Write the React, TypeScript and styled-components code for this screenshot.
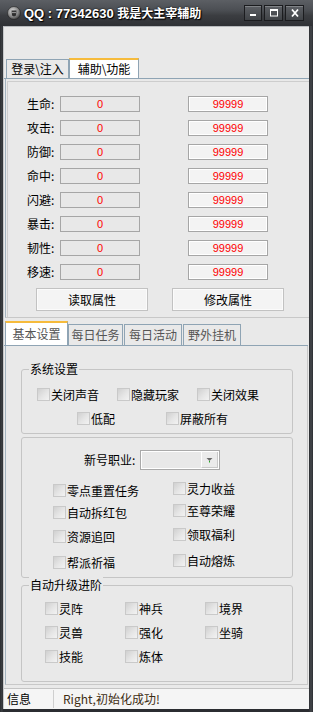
import React from 'react';
import styled, { createGlobalStyle } from 'styled-components';

const GlobalStyle = createGlobalStyle`
  html, body { margin: 0; padding: 0; background: #2f3135; }
  body {
    font-family: "Noto Sans CJK SC", "Liberation Sans", sans-serif;
    font-size: 12px;
    color: #000;
  }
  #root { width: 313px; height: 712px; }
`;

const Win = styled.div`
  width: 313px;
  height: 712px;
  display: flex;
  flex-direction: column;
  background: linear-gradient(90deg, #2b2d31 0px, #3d4044 2px, #2b2d31 3px, #2b2d31 309px, #45484c 311px, #2b2d31 313px);
  box-sizing: border-box;
  overflow: hidden;
`;

const TitleBar = styled.div`
  height: 26px;
  flex: none;
  display: flex;
  align-items: center;
  padding: 0 9px 0 7px;
  background: linear-gradient(#5c5f64 0%, #4b4e53 40%, #3b3d41 60%, #2f3135 100%);
`;

const AppIcon = styled.svg`
  width: 14px;
  height: 14px;
  flex: none;
`;

const Title = styled.div`
  margin-left: 3px;
  color: #fff;
  font: bold 13px "Liberation Sans", "Noto Sans CJK SC", sans-serif;
  line-height: 16px;
  text-shadow: 0 0 2px #000, 1px 1px 1px #000;
  white-space: nowrap;
`;

const TitleCn = styled.span`
  font-family: "Noto Sans CJK SC", sans-serif;
  font-size: 12px;
  font-weight: bold;
`;

const WinButtons = styled.div`
  margin-left: auto;
  align-self: flex-start;
  margin-top: 5px;
  display: flex;
  gap: 2px;
`;

const WinButton = styled.div<{ $w: number }>`
  width: ${(p) => p.$w}px;
  height: 16px;
  box-sizing: border-box;
  border: 1px solid #1b1c1f;
  background: linear-gradient(#5d6065, #404347);
  box-shadow: inset 0 1px 0 rgba(255, 255, 255, 0.22);
  display: flex;
  align-items: center;
  justify-content: center;
`;

const Client = styled.div`
  flex: 1;
  display: flex;
  flex-direction: column;
  margin: 0 4px 3px 3px;
  background: #e9e9e9;
  border-top: 1px solid #b8bbbe;
  border-left: 1px solid #c6c8ca;
`;

const TopStrip = styled.div`
  margin-top: 31px;
  height: 21px;
  box-sizing: border-box;
  display: flex;
  align-items: flex-end;
  padding-left: 2px;
  border-bottom: 1px solid #8fa4b4;
`;

const BottomStrip = styled.div`
  height: 28px;
  box-sizing: border-box;
  display: flex;
  align-items: flex-end;
  padding-left: 1px;
  margin-right: 1px;
  border-bottom: 1px solid #8fa4b4;
`;

const Tab = styled.div<{ $active?: boolean; $w: number; $h: number; $ml?: number; $muted?: boolean }>`
  width: ${(p) => p.$w}px;
  height: ${(p) => p.$h}px;
  margin-left: ${(p) => p.$ml ?? 0}px;
  box-sizing: border-box;
  border: 1px solid #8fa4b4;
  border-bottom: none;
  border-top: ${(p) => (p.$active ? '2px solid #f6bb3c' : '1px solid #8fa4b4')};
  background: ${(p) => (p.$active ? '#ffffff' : '#e9e9e9')};
  color: ${(p) => (p.$muted ? '#555555' : '#000000')};
  display: flex;
  align-items: center;
  justify-content: center;
  font-size: 12px;
  line-height: 14px;
  white-space: nowrap;
  flex: none;
`;

const TopPanel = styled.div`
  height: 239px;
  flex: none;
  box-sizing: border-box;
  margin-left: 1px;
  border-left: 1px solid #a3b3bf;
  border-bottom: 1px solid #c8c8c8;
  padding: 2px 0 0 1px;
  display: flex;
`;

const TopInner = styled.div`
  flex: 1;
  border-top: 1px solid #cdcdcd;
  border-left: 1px solid #cdcdcd;
  display: flex;
  flex-direction: column;
  padding: 14px 0 0 19px;
`;

const StatList = styled.div`
  display: flex;
  flex-direction: column;
  gap: 8px;
`;

const StatRow = styled.div`
  display: flex;
  align-items: center;
  height: 16px;
`;

const StatLabel = styled.div`
  width: 33px;
  font-size: 12px;
  line-height: 14px;
  white-space: nowrap;
`;

const ValueBox = styled.div<{ $edit?: boolean }>`
  width: 80px;
  height: 16px;
  box-sizing: border-box;
  border: 1px solid #a6a6a6;
  background: ${(p) => (p.$edit ? '#f3f3f3' : '#e8e8e8')};
  box-shadow: ${(p) => (p.$edit ? 'inset 0 0 0 1px #ffffff' : 'none')};
  margin-left: ${(p) => (p.$edit ? '48px' : '0')};
  color: #ff0000;
  font: 11px "Liberation Sans", sans-serif;
  line-height: 14px;
  text-align: center;
`;

const ButtonRow = styled.div`
  display: flex;
  gap: 24px;
  margin: 8px 0 0 9px;
`;

const PushButton = styled.div`
  width: 112px;
  height: 23px;
  box-sizing: border-box;
  border: 1px solid #c2c2c2;
  background: #f4f4f4;
  box-shadow: inset 0 0 0 1px #fbfbfb;
  display: flex;
  align-items: center;
  justify-content: center;
  font-size: 12px;
  line-height: 14px;
`;

const BottomPanel = styled.div`
  height: 339px;
  flex: none;
  box-sizing: border-box;
  margin: 0 1px;
  border-left: 1px solid #a3b3bf;
  border-right: 1px solid #c8c8c8;
  border-bottom: 1px solid #c8c8c8;
  display: flex;
  flex-direction: column;
`;

const Group = styled.div<{ $mt: number; $pt: number; $pb: number }>`
  position: relative;
  margin: ${(p) => p.$mt}px 0 0 15px;
  width: 272px;
  box-sizing: border-box;
  border: 1px solid #c5c5c5;
  border-radius: 3px;
  padding: ${(p) => p.$pt}px 0 ${(p) => p.$pb}px 0;
  flex: none;
`;

const Legend = styled.span`
  position: absolute;
  top: -9px;
  left: 7px;
  padding: 0 1px;
  background: #e9e9e9;
  font-size: 12px;
  line-height: 16px;
  white-space: nowrap;
`;

const CheckGrid = styled.div<{ $col: number; $pl: number; $mt?: number; $n: number }>`
  display: grid;
  grid-template-columns: repeat(${(p) => p.$n}, ${(p) => p.$col}px);
  row-gap: 11px;
  padding-left: ${(p) => p.$pl}px;
  margin-top: ${(p) => p.$mt ?? 0}px;
`;

const Check = styled.div`
  display: flex;
  align-items: center;
  gap: 1px;
  height: 13px;
  font-size: 12px;
  line-height: 13px;
  white-space: nowrap;
`;

const Box = styled.span`
  width: 13px;
  height: 13px;
  box-sizing: border-box;
  flex: none;
  border: 1px solid #c9c9c9;
  background: linear-gradient(135deg, #d0d0d0 0%, #e6e6e6 55%, #f2f2f2 100%);
`;

const ComboRow = styled.div`
  display: flex;
  align-items: center;
  height: 20px;
  padding-left: 62px;
`;

const ComboLabel = styled.div`
  width: 56px;
  font-size: 12px;
  line-height: 14px;
  white-space: nowrap;
`;

const Combo = styled.div`
  width: 80px;
  height: 20px;
  box-sizing: border-box;
  border: 1px solid #a9a9a9;
  box-shadow: inset 0 0 0 1px #ffffff;
  background: #e8e8e8;
  display: flex;
  justify-content: flex-end;
  padding: 1px;
`;

const ComboButton = styled.div`
  width: 17px;
  box-sizing: border-box;
  border-left: 1px solid #ffffff;
  border-right: 1px solid #c9c9c9;
  border-bottom: 1px solid #c9c9c9;
  background: #ebebeb;
  display: flex;
  align-items: center;
  justify-content: center;
`;

const Columns = styled.div`
  display: flex;
  margin-top: 12px;
  padding-left: 31px;
`;

const Column = styled.div<{ $w?: number; $mt: number }>`
  width: ${(p) => (p.$w ? `${p.$w}px` : 'auto')};
  margin-top: ${(p) => p.$mt}px;
  display: grid;
  grid-template-rows: 22px 24px 26px 13px;
  align-items: start;
`;

const StatusBar = styled.div`
  margin-top: auto;
  height: 21px;
  box-sizing: border-box;
  border-top: 1px solid #c4c4c4;
  background: #f5f5f5;
  display: flex;
  align-items: stretch;
  font-size: 12px;
  line-height: 14px;
`;

const StatusCell = styled.div<{ $w?: number; $pl: number; $color?: string }>`
  width: ${(p) => (p.$w ? `${p.$w}px` : 'auto')};
  box-sizing: border-box;
  padding-left: ${(p) => p.$pl}px;
  display: flex;
  align-items: center;
  color: ${(p) => p.$color ?? '#000'};
  border-right: ${(p) => (p.$w ? '1px solid #cfcfcf' : 'none')};
  margin: ${(p) => (p.$w ? '1px 0' : '0')};
  white-space: nowrap;
`;

const stats = ['生命', '攻击', '防御', '命中', '闪避', '暴击', '韧性', '移速'];

const CheckItem = ({ label }: { label: string }) => (
  <Check>
    <Box />
    <span>{label}</span>
  </Check>
);

export default function App() {
  return (
    <>
      <GlobalStyle />
      <Win>
        <TitleBar>
          <AppIcon viewBox="0 0 14 14">
            <defs>
              <radialGradient id="ig" cx="40%" cy="35%" r="70%">
                <stop offset="0" stopColor="#d8d8d8" />
                <stop offset="0.6" stopColor="#8a8a8a" />
                <stop offset="1" stopColor="#3a3a3a" />
              </radialGradient>
            </defs>
            <circle cx="7" cy="7" r="6.5" fill="url(#ig)" stroke="#222" strokeWidth="0.6" />
            <path d="M4.5 4.5 L9.5 4.5 L9 9.5 L7 10.5 L5 9.5 Z" fill="#2e2e2e" />
            <circle cx="6" cy="6.5" r="0.8" fill="#bbb" />
            <circle cx="8" cy="6.5" r="0.8" fill="#bbb" />
          </AppIcon>
          <Title>
            QQ : 77342630 <TitleCn>我是大主宰辅助</TitleCn>
          </Title>
          <WinButtons>
            <WinButton $w={18}>
              <svg width="10" height="10" viewBox="0 0 10 10">
                <rect x="2" y="6" width="6" height="2" fill="#fff" />
              </svg>
            </WinButton>
            <WinButton $w={19}>
              <svg width="10" height="10" viewBox="0 0 10 10">
                <rect x="1.5" y="1.5" width="7" height="6.5" fill="none" stroke="#fff" strokeWidth="1" />
                <rect x="1" y="1" width="8" height="2" fill="#fff" />
              </svg>
            </WinButton>
            <WinButton $w={19}>
              <svg width="10" height="10" viewBox="0 0 10 10">
                <path d="M2 1.5 L8 8.5 M8 1.5 L2 8.5" stroke="#fff" strokeWidth="1.8" />
              </svg>
            </WinButton>
          </WinButtons>
        </TitleBar>

        <Client>
          <TopStrip>
            <Tab $w={63} $h={19}>登录\注入</Tab>
            <Tab $w={70} $h={20} $active>辅助\功能</Tab>
          </TopStrip>

          <TopPanel>
            <TopInner>
              <StatList>
                {stats.map((s) => (
                  <StatRow key={s}>
                    <StatLabel>{s}:</StatLabel>
                    <ValueBox>0</ValueBox>
                    <ValueBox $edit>99999</ValueBox>
                  </StatRow>
                ))}
              </StatList>
              <ButtonRow>
                <PushButton>读取属性</PushButton>
                <PushButton>修改属性</PushButton>
              </ButtonRow>
            </TopInner>
          </TopPanel>

          <BottomStrip>
            <Tab $w={63} $h={24} $active $muted>基本设置</Tab>
            <Tab $w={55} $h={21} $muted>每日任务</Tab>
            <Tab $w={58} $h={21} $ml={1} $muted>每日活动</Tab>
            <Tab $w={58} $h={21} $ml={1} $muted>野外挂机</Tab>
          </BottomStrip>

          <BottomPanel>
            <Group $mt={23} $pt={18} $pb={8}>
              <Legend>系统设置</Legend>
              <CheckGrid $n={3} $col={80} $pl={15}>
                <CheckItem label="关闭声音" />
                <CheckItem label="隐藏玩家" />
                <CheckItem label="关闭效果" />
              </CheckGrid>
              <CheckGrid $n={2} $col={89} $pl={55} $mt={11}>
                <CheckItem label="低配" />
                <CheckItem label="屏蔽所有" />
              </CheckGrid>
            </Group>

            <Group $mt={3} $pt={12} $pb={8}>
              <ComboRow>
                <ComboLabel>新号职业:</ComboLabel>
                <Combo>
                  <ComboButton>
                    <svg width="7" height="6" viewBox="0 0 7 6">
                      <path d="M0.5 1 L6.5 1 L3.5 4 Z" fill="#6a6a6a" />
                      <rect x="3" y="4" width="1" height="1.5" fill="#22aa22" />
                    </svg>
                  </ComboButton>
                </Combo>
              </ComboRow>
              <Columns>
                <Column $w={120} $mt={2}>
                  <CheckItem label="零点重置任务" />
                  <CheckItem label="自动拆红包" />
                  <CheckItem label="资源追回" />
                  <CheckItem label="帮派祈福" />
                </Column>
                <Column $mt={0}>
                  <CheckItem label="灵力收益" />
                  <CheckItem label="至尊荣耀" />
                  <CheckItem label="领取福利" />
                  <CheckItem label="自动熔炼" />
                </Column>
              </Columns>
            </Group>

            <Group $mt={7} $pt={16} $pb={18}>
              <Legend>自动升级进阶</Legend>
              <CheckGrid $n={3} $col={80} $pl={23}>
                <CheckItem label="灵阵" />
                <CheckItem label="神兵" />
                <CheckItem label="境界" />
                <CheckItem label="灵兽" />
                <CheckItem label="强化" />
                <CheckItem label="坐骑" />
                <CheckItem label="技能" />
                <CheckItem label="炼体" />
              </CheckGrid>
            </Group>
          </BottomPanel>

          <StatusBar>
            <StatusCell $w={50} $pl={3}>信息</StatusCell>
            <StatusCell $pl={9} $color="#3d2c12">Right,初始化成功!</StatusCell>
          </StatusBar>
        </Client>
      </Win>
    </>
  );
}
